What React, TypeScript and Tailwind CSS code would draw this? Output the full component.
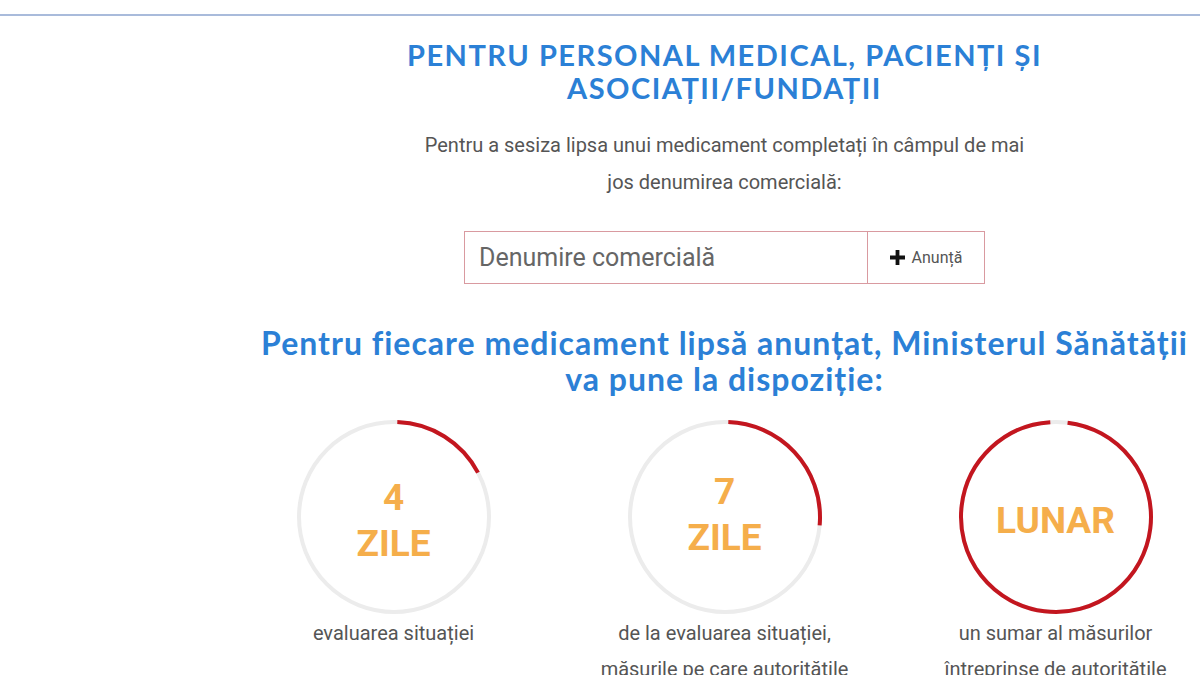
import React from "react";

const RED = "#c3161f";
const GRAY = "#ececec";

function Ring({ start, end, children }: { start: number; end: number; children: React.ReactNode }) {
  const r = 95;
  const c = 2 * Math.PI * r;
  const len = ((end - start) / 360) * c;
  return (
    <div className="relative w-[196px] h-[196px]">
      <svg width="196" height="196" viewBox="0 0 196 196" className="absolute inset-0">
        <circle cx="98" cy="98" r={r} fill="none" stroke={GRAY} strokeWidth="4" />
        <circle
          cx="98"
          cy="98"
          r={r}
          fill="none"
          stroke={RED}
          strokeWidth="4"
          strokeDasharray={`${len} ${c}`}
          transform={`rotate(${start - 90} 98 98)`}
        />
      </svg>
      <div className="absolute inset-0 pt-[7px] flex flex-col items-center justify-center font-['Roboto',sans-serif] font-bold text-[#f5ae4b] text-[37px] leading-[46px]">
        {children}
      </div>
    </div>
  );
}

function Col({ ring, caption }: { ring: React.ReactNode; caption: string }) {
  return (
    <div className="w-[331px] flex flex-col items-center">
      {ring}
      <p className="mt-0 w-[262px] text-center font-['Roboto',sans-serif] text-[20px] leading-[36px] text-[#555]">
        {caption}
      </p>
    </div>
  );
}

export default function App() {
  return (
    <div className="w-[1200px] h-[675px] overflow-hidden bg-white relative">
      <div className="h-[14px]" />
      <div className="h-[2px] bg-[#a9bbdb]" />
      <div className="ml-[228px] w-[993px] flex flex-col items-center">
        <h1 className="mt-[22px] text-center font-['Lato',sans-serif] font-bold text-[#2b80d6] text-[29px] leading-[33px] tracking-[1.5px]">
          PENTRU PERSONAL MEDICAL, PACIENȚI ȘI
          <br />
          ASOCIAȚII/FUNDAȚII
        </h1>
        <p className="mt-[23px] w-[640px] text-center font-['Roboto',sans-serif] text-[20px] leading-[37px] text-[#555]">
          Pentru a sesiza lipsa unui medicament completați în câmpul de mai
          <br />
          jos denumirea comercială:
        </p>
        <div className="mt-[30px] flex h-[53px] border border-[#d99aa0]">
          <div className="w-[402px] flex items-center pl-[14px] font-['Roboto',sans-serif] text-[25px] text-[#666]">
            Denumire comercială
          </div>
          <div className="w-[117px] border-l border-[#d99aa0] flex items-center justify-center gap-[7px] font-['Roboto',sans-serif] text-[16px] text-[#555]">
            <svg width="15" height="15" viewBox="0 0 15 15">
              <path d="M5.6 0h3.8v5.6H15v3.8H9.4V15H5.6V9.4H0V5.6h5.6z" fill="#111" />
            </svg>
            Anunță
          </div>
        </div>
        <h2 className="mt-[41px] text-center font-['Lato',sans-serif] font-bold text-[#2b80d6] text-[32px] leading-[36px] tracking-[1px]">
          Pentru fiecare medicament lipsă anunțat, Ministerul Sănătății
          <br />
          va pune la dispoziție:
        </h2>
        <div className="mt-[22px] flex">
          <Col
            ring={
              <Ring start={2} end={62}>
                <span>4</span>
                <span>ZILE</span>
              </Ring>
            }
            caption="evaluarea situației"
          />
          <Col
            ring={
              <Ring start={2} end={95}>
                <span className="-mt-[12px]">7</span>
                <span>ZILE</span>
              </Ring>
            }
            caption="de la evaluarea situației, măsurile pe care autoritățile le vor lua"
          />
          <Col
            ring={
              <Ring start={7} end={356}>
                <span>LUNAR</span>
              </Ring>
            }
            caption="un sumar al măsurilor întreprinse de autoritățile competente"
          />
        </div>
      </div>
    </div>
  );
}
